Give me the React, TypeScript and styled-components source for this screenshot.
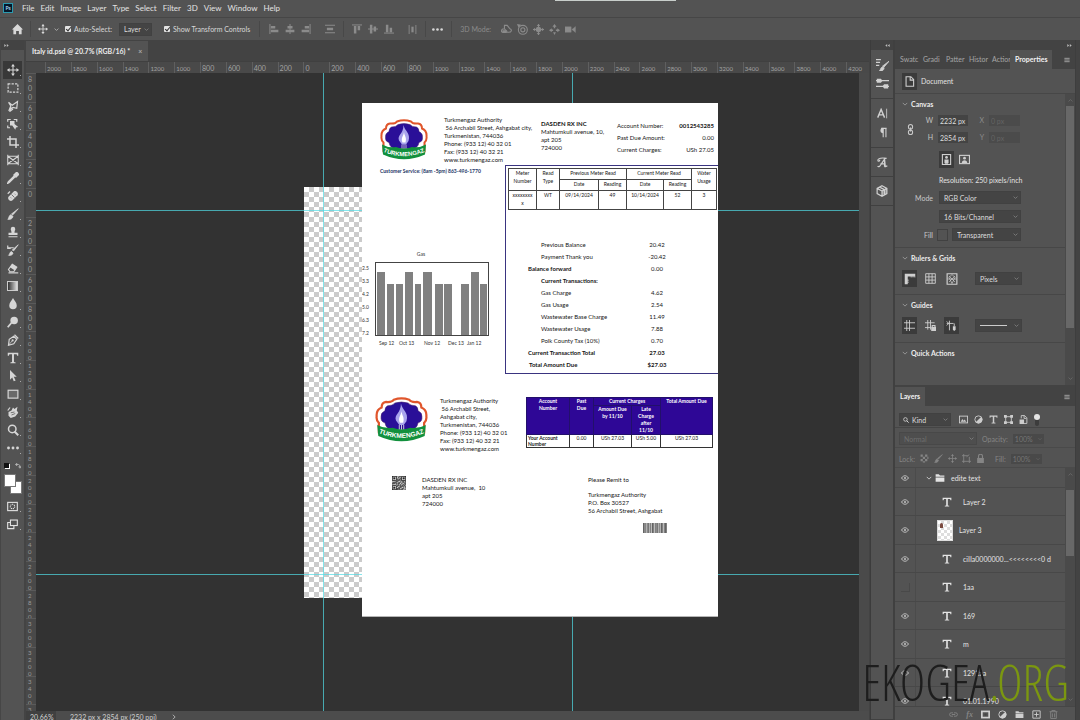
import React from "react";
import styled, { createGlobalStyle } from "styled-components";

const ui = `Lato, "Open Sans", sans-serif`;
const doc = `Lato, "Open Sans", sans-serif`;

const Global = createGlobalStyle`
  * { box-sizing: border-box; }
  body { margin: 0; background: #535353; color: #e2e2e2; font-family: ${ui}; font-size: 7px; }
  button, input, select { font: inherit; color: inherit; margin: 0; }
  button { border: 0; padding: 0; background: none; display: flex; align-items: center; justify-content: center; }
  ul { list-style: none; margin: 0; padding: 0; }
  h2, p { margin: 0; font-size: inherit; }
  svg { display: block; flex: none; }
`;

/* ---------- icons, all drawn on a 16 unit grid ---------- */

const line = { fill: "none", stroke: "currentColor", strokeWidth: 1.6 } as const;

const shapes: Record<string, React.ReactNode> = {
  move: <><path d="M8 1v14M1 8h14" {...line} strokeWidth={1.4} /><path d="M8 0l2.6 3.4H5.4zM8 16l2.6-3.4H5.4zM0 8l3.4-2.6v5.2zM16 8l-3.4-2.6v5.2z" fill="currentColor" /></>,
  marquee: <rect x="1.5" y="2.5" width="13" height="11" {...line} strokeDasharray="3 1.6" />,
  lasso: <path d="M2 3l5 4 7-5-1 9-5-1-5 3 2-5-3-5M5 9l-1 6 4-3" {...line} />,
  object: <><path d="M1 5V2h4M9 2h4v3M1 10v3h3" {...line} /><path d="M4 4h6v4l5 4-3 .6-1 3L7 10H4z" fill="currentColor" /></>,
  crop: <path d="M4 0v12h12M0 4h12v12" {...line} strokeWidth={2} />,
  frame: <path d="M1 3h14v10H1zM1 3l14 10M15 3L1 13M1 1v14M15 1v14" {...line} strokeWidth={1.4} />,
  dropper: <><path d="M10 5l-8 8-1 2 2-1 8-8" {...line} strokeWidth={2} /><path d="M8 4l4-4c2-1 5 2 4 4l-4 4z" fill="currentColor" /></>,
  heal: <><path d="M2 9l7-7c3-2 7 2 5 5l-7 7c-3 2-7-2-5-5z" fill="currentColor" /><path d="M6 6l4 4M5 10l1 1M10 5l1 1" stroke="#535353" /><path d="M1 5l3-3" {...line} /></>,
  brush: <path d="M15 1l-7 8-2-1zM1 15c2-1 1-5 4-6l3 2c0 3-4 5-7 4z" fill="currentColor" stroke="currentColor" />,
  stamp: <path d="M5 4a3 3 0 016 0c0 2-1 2-1 5h4v3H2V9h4c0-3-1-3-1-5zM2 13.5h12V15H2z" fill="currentColor" />,
  history: <><path d="M15 1L9 9 7 8zM2 15c2-1 1-4 4-5l2 2c0 2-3 4-6 3z" fill="currentColor" stroke="currentColor" /><path d="M1 5h8M1 2v4h4" {...line} /></>,
  eraser: <><path d="M7 3l6 4-4 6H4L2 10z" {...line} /><path d="M7 3l6 4-3 4-6-4z" fill="currentColor" /><path d="M2 14.5h13" {...line} /></>,
  drop: <path d="M8 0c2 4 5 6 5 10a5 5 0 01-10 0c0-4 3-6 5-10z" fill="currentColor" />,
  dodge: <><circle cx="9.5" cy="6" r="5" fill="currentColor" /><path d="M6 9l-5 6" {...line} strokeWidth={2.4} /></>,
  pen: <><path d="M2 15l1-8 6-4 4 4-4 6-7 2zM10 1l5 5" {...line} /><circle cx="7.5" cy="8.5" r="1.4" fill="currentColor" /><path d="M2 15l5-6" {...line} strokeWidth={1} /></>,
  type: <path d="M1 1h14v4h-1.4L12.8 3H9.3v10.4l2.2.5V15h-7v-1.100l2.200-.5V3H3.200l-.8 2H1z" fill="currentColor" />,
  arrow: <path d="M4 0l9 9H9l2.500 5-2.500 1-2-5-3 3z" fill="currentColor" />,
  rect: <rect x="1.500" y="3" width="13" height="10.500" {...line} fill="#6a6a6a" />,
  rotate: <><path d="M2 8l4-2 2-4 2 2 4-3-1 5 2 3-4 5-6 2-3-3z" fill="currentColor" /><path d="M5 9l5-1M6 12l5-2" stroke="#535353" /><path d="M1 6l3-4" {...line} /></>,
  zoom: <><circle cx="7" cy="6.500" r="5" {...line} strokeWidth={2} /><path d="M10 10l5 5" {...line} strokeWidth={2.600} /></>,
  dots: <><circle cx="2" cy="8" r="1.900" fill="currentColor" /><circle cx="8" cy="8" r="1.900" fill="currentColor" /><circle cx="14" cy="8" r="1.900" fill="currentColor" /></>,
  mask: <><rect x="1" y="2" width="14" height="12" {...line} /><circle cx="8" cy="8" r="3.200" {...line} strokeDasharray="1.600 1" /></>,
  screens: <><rect x="5" y="1.500" width="10" height="8" {...line} /><path d="M5 5H1v9h9v-4" {...line} /></>,
  home: <path d="M8 0l8 8h-2v7h-4v-5H6v5H2V8H0z" fill="currentColor" />,
  alignL: <><path d="M1.500 0v16" {...line} /><path d="M3 3h7v4H3zM3 9h12v4H3z" fill="currentColor" /></>,
  alignC: <><path d="M8 0v16" {...line} /><path d="M4 3h8v4H4zM1 9h14v4H1z" fill="currentColor" /></>,
  alignR: <><path d="M14.500 0v16" {...line} /><path d="M6 3h7v4H6zM1 9h12v4H1z" fill="currentColor" /></>,
  spread: <><path d="M0 2h16M0 14h16" {...line} /><path d="M3 6h10v4H3z" fill="currentColor" /></>,
  alignT: <><path d="M0 1.500h16" {...line} /><path d="M3 3h4v12H3zM9 3h4v7H9z" fill="currentColor" /></>,
  alignM: <><path d="M0 8h16" {...line} /><path d="M3 1h4v14H3zM9 4h4v8H9z" fill="currentColor" /></>,
  alignB: <><path d="M0 14.500h16" {...line} /><path d="M3 1h4v12H3zM9 6h4v7H9z" fill="currentColor" /></>,
  spreadV: <><path d="M2 0v16M14 0v16" {...line} /><path d="M6 3h4v10H6z" fill="currentColor" /></>,
  orbit: <><path d="M5 7c-4 0-6 3-3 5h9c5 0 5-4 2-5L9 2H5v5l4 4" {...line} /><path d="M2 9h6v4H2z" fill="currentColor" /></>,
  roll: <><circle cx="8.500" cy="8.500" r="6.500" {...line} /><circle cx="8.500" cy="8.500" r="3" {...line} /><path d="M0 0l6 1-4 4z" fill="currentColor" /></>,
  pan3d: <><path d="M8 0v16M0 8h16" {...line} /><circle cx="8" cy="8" r="4" fill="currentColor" /><path d="M8 0l2.600 3H5.400zM8 16l2.600-3H5.400zM0 8l3-2.600v5.200zM16 8l-3-2.600v5.200z" fill="currentColor" /></>,
  slide: <path d="M8 0l3 4H9v2H7V4H5zM6 8H4V6L0 9l4 3v-2h2zM10 8h2V6l4 3-4 3v-2h-2zM6 12h4l-2 4z" fill="currentColor" />,
  camera: <path d="M0 4h9v8H0zM10 8l5-4v8zM15 3v10" fill="currentColor" stroke="currentColor" strokeWidth=".5" />,
  down: <path d="M2 5l6 6 6-6" {...line} strokeWidth={2} />,
  up: <path d="M2 11l6-6 6 6" {...line} strokeWidth={2} />,
  right: <path d="M5 2l6 6-6 6" {...line} strokeWidth={2} />,
  right2: <path d="M1 3l6 5-6 5zM9 3l6 5-6 5z" fill="currentColor" />,
  left2: <path d="M7 3L1 8l6 5zM15 3L9 8l6 5z" fill="currentColor" />,
  menu: <path d="M1 3.500h14M1 8h14M1 12.500h14" {...line} strokeWidth={2} />,
  brushes: <><path d="M0 2h6M0 5.500h5M0 9h4" {...line} /><path d="M16 4l-6 7-2-1zM4 16c2-1 1-4 4-5l2 1c0 3-3 5-6 4z" fill="currentColor" stroke="currentColor" /></>,
  sliders: <><path d="M0 4.500h16M0 11.500h16" {...line} /><path d="M1 2h5l2 2.500L6 7H1zM15 9h-5l-2 2.500 2 2.500h5z" fill="currentColor" /></>,
  character: <><path d="M1 14L6 2l5 12M3 10h6" {...line} strokeWidth={2} /><path d="M14 1v14" {...line} strokeWidth={1.200} /></>,
  paragraph: <><path d="M9 15V2M13 15V2M6 2h8" {...line} /><path d="M9 1a4 4 0 000 8z" fill="currentColor" /></>,
  glyphs: <path d="M1 5c1-4 7-4 13-3M1 13c1 2 3 1 4-1l6-9 1 11 3-1M5 10h7M11 3v11M1 5c1 2 3 1 3-1" {...line} strokeWidth={1.800} />,
  cube: <><path d="M8 1l6.500 3.500v7L8 15l-6.500-3.500v-7zM8 8v7M8 8L1.500 4.500M8 8l6.500-3.500M4.800 2.800l6.500 3.500v7" {...line} /><path d="M8 8l6.500-3.500v7L8 15z" fill="currentColor" opacity=".5" /></>,
  page: <path d="M3 1h7l4 4v10H3zM9 1v5h5" {...line} />,
  chain: <><rect x="5" y="0.800" width="6" height="6.500" rx="3" {...line} /><rect x="5" y="8.700" width="6" height="6.500" rx="3" {...line} /><path d="M8 5v6" {...line} /></>,
  portrait: <><rect x="2" y="0.800" width="12" height="14.400" {...line} /><circle cx="8" cy="5" r="2" fill="currentColor" /><path d="M5 8h6v4l-1 2H6l-1-2z" fill="currentColor" /></>,
  landscape: <><rect x="0.800" y="2" width="14.400" height="12" {...line} /><circle cx="8" cy="6" r="2" fill="currentColor" /><path d="M4 13c0-5 8-5 8 0z" fill="currentColor" /></>,
  rulers: <path d="M1 15V1h14v5h-1V4.500h-1.500V6h-1V4.500H10V6H9V4.500H5V9h1.500v1H5v1.500h1.500v1H5V15z" fill="currentColor" />,
  grid: <path d="M1 1h14v14H1zM5.700 1v14M10.300 1v14M1 5.700h14M1 10.300h14" {...line} strokeWidth={1.300} />,
  pixelGrid: <><path d="M1.500 1h13v14h-13z" {...line} /><path d="M4 4l8 8M12 4l-8 8M8 2l-4 4 4 8 4-8zM2 8h12" {...line} strokeWidth={0.900} /></>,
  guides: <path d="M4 0v16M8 0v16M0 4h16M0 12h16" {...line} strokeWidth={1.300} />,
  guidesLock: <><path d="M4 0v14M8 0v14M0 4h14M0 11h8" {...line} strokeWidth={1.300} /><path d="M9 10h7v6H9z" fill="currentColor" /><path d="M10.500 10V8h4v2" {...line} /></>,
  guidesSmart: <><path d="M5 1v14M1 5h10M12 5v4M1 2l3 3-3 3" {...line} strokeWidth={1.300} /><path d="M10 9h4v5l-2 2-2-2z" fill="currentColor" /></>,
  search: <><circle cx="6.500" cy="6.500" r="4.800" {...line} strokeWidth={2} /><path d="M10 10l5 5" {...line} strokeWidth={2.500} /></>,
  image: <><rect x="0.800" y="2" width="14.400" height="12" {...line} /><path d="M3 12l3-5 2 3 2-2 3 4z" fill="currentColor" /></>,
  adjust: <><circle cx="8" cy="8" r="6.500" {...line} /><path d="M12.600 3.400A6.500 6.500 0 013.400 12.600z" fill="currentColor" /></>,
  bounds: <><path d="M3 3h10v10H3z" {...line} /><path d="M0 0h5v5H0zM11 0h5v5h-5zM0 11h5v5H0zM11 11h5v5h-5z" fill="currentColor" /></>,
  smart: <><path d="M4 6V1h6l4 4v10H8M9 1v5h4" {...line} /><path d="M1 8h8v8H1z" fill="currentColor" /></>,
  checker: <path d="M1 1h4v4H1zM9 1h4v4H9zM5 5h4v4H5zM1 9h4v4H1zM9 9h4v4H9zM13 5h2v4h-2zM5 13h4v2H5z" fill="currentColor" />,
  artboard: <path d="M3 0v16M13 5v11M0 3h10M0 13h16M8 5l5-4" {...line} />,
  lock: <><path d="M2 7h12v9H2z" fill="currentColor" /><path d="M4.500 7V4a3.500 3.500 0 017 0v3" {...line} strokeWidth={2} /></>,
  eye: <><path d="M1 8c4-6 10-6 14 0-4 6-10 6-14 0z" {...line} strokeWidth={2} /><circle cx="8" cy="8" r="2.200" fill="currentColor" /></>,
  folder: <path d="M1 2h5l2 2h7v2H1zM1 7h14v7H1z" fill="currentColor" />,
  link: <path d="M7 5H4a3 3 0 000 6h3M9 5h3a3 3 0 010 6H9M5 8h6" {...line} />,
  addMask: <><rect x="1.500" y="2.500" width="13" height="11" {...line} strokeWidth={3} /><circle cx="8" cy="8" r="2" fill="#444" /></>,
  plus: <path d="M1.500 1.500h13v13h-13zM8 4v8M4 8h8" {...line} />,
  trash: <path d="M1 3h14M5 3V1h6v2M3 3v12h10V3M6 6v7M10 6v7" {...line} />,
  swap: <path d="M3 4h6c3 0 4 2 4 6M1 4l4-3v6zM13 14l-3-4h6z" fill="none" stroke="currentColor" strokeWidth={1.800} />,
};

const Icon = ({ name, size = 10 }: { name: string; size?: number }) => (
  <svg width={size} height={size} viewBox="0 0 16 16" aria-hidden="true">{shapes[name]}</svg>
);

/* ---------- application frame ---------- */

const Frame = styled.div`
  height: 100vh; display: flex; flex-direction: column; overflow: hidden; position: relative;
`;
const MenuBar = styled.nav`
  height: 18px; padding: 0 3px 2px; display: flex; align-items: center; gap: 6px; font-size: 8px; flex: none;
  border-bottom: 1px solid #464646; position: relative;
  &::after { content: ""; position: absolute; top: 0; left: 51.4%; width: 121px; height: 1px; background: #c8cecb; }
`;
const Logo = styled.span`
  width: 10px; height: 10px; margin-right: 3px; border: 1px solid #2b9bb0; background: #04182b; color: #a9dbf2;
  font-size: 5px; line-height: 8px; font-weight: 700; text-align: center;
`;
const OptionsBar = styled.div`
  height: 22px; display: flex; align-items: center; padding: 0 12px; color: #d8d8d8; gap: 6px; flex: none;
`;
const Sep = styled.i<{ $gap?: number }>`
  width: 1px; height: 16px; background: #484848; margin: 0 ${p => p.$gap ?? 0}px;
`;
const Group = styled.div<{ $gap: number; $dim?: boolean }>`
  display: flex; align-items: center; gap: ${p => p.$gap}px; color: ${p => (p.$dim ? "#8b8b8b" : "inherit")};
`;
const Check = styled.label`
  display: flex; align-items: center; gap: 3px; white-space: nowrap; font-size: 7px;
  input { appearance: none; width: 6px; height: 6px; border-radius: 1px; background: #e4e4e4; position: relative; }
  input:checked::after {
    content: ""; position: absolute; left: 2px; top: 0; width: 2px; height: 4px;
    border: solid #333; border-width: 0 1px 1px 0; transform: rotate(40deg);
  }
`;
const SelectBox = styled.span<{ $w: number; $h?: number; $flat?: boolean }>`
  position: relative; display: flex; align-items: center; width: ${p => p.$w}px; height: ${p => p.$h ?? 13}px;
  background: ${p => (p.$flat ? "#4e4e4e" : "#444")}; border: 1px solid ${p => (p.$flat ? "#484848" : "#414141")};
  color: ${p => (p.$flat ? "#7d7d7d" : "#dedede")};
  select { appearance: none; width: 100%; height: 100%; border: 0; background: none; padding: 0 8px 0 4px; outline: 0; }
  svg { position: absolute; right: 2px; color: #999; pointer-events: none; }
`;
const Pick = ({ w, h, label, value, flat }: { w: number; h?: number; label: string; value: string; flat?: boolean }) => (
  <SelectBox $w={w} $h={h} $flat={flat}>
    <select aria-label={label} disabled={flat}><option>{value}</option></select>
    <Icon name="down" size={5} />
  </SelectBox>
);

const Body = styled.div`
  flex: 1; min-height: 0; display: grid; grid-template-columns: 26px minmax(0, 1fr) 26px 181px 4px; background: #434343;
`;

/* ---------- tool bar ---------- */

const Tools = styled.aside`
  background: #535353; border-right: 2px solid #444; border-left: 1px solid #464646;
  display: flex; flex-direction: column; align-items: center;
`;
const Collapse = styled.button<{ $end?: boolean }>`
  align-self: stretch; height: 10px; flex: none; background: #434343; color: #bbb; padding: 0 3px;
  justify-content: ${p => (p.$end ? "flex-end" : "flex-start")};
`;
const ToolList = styled.div`padding-top: 11px; display: flex; flex-direction: column; color: #d6d6d6;`;
const Tool = styled.button<{ $on?: boolean }>`
  width: 19px; height: 18px; background: ${p => (p.$on ? "#383838" : "none")}; position: relative;
  &::after { content: ""; position: absolute; right: 1px; bottom: 3px; width: 1px; height: 1px; background: #aaa; }
`;
const GradientChip = styled.span`
  width: 11px; height: 10px; border: 1px solid #ccc; background: linear-gradient(90deg, #333, #ddd);
`;
const SmallRow = styled.div`display: flex; gap: 6px; height: 17px; align-items: center; color: #ccc;`;
const Defaults = styled.span`width: 5px; height: 5px; background: #111; box-shadow: 1px 1px #fff;`;
const Swatches = styled.div`
  display: grid; grid-template-columns: 6px 6px 6px; grid-template-rows: 7px 6px 7px; margin-bottom: 3px;
  i { background: #fff; border: 1px solid #777; grid-area: 2 / 2 / 4 / 4; }
  i + i { grid-area: 1 / 1 / 3 / 3; }
`;
const toolNames = ["move", "marquee", "lasso", "object", "crop", "frame", "dropper", "heal", "brush", "stamp", "history",
  "eraser", "gradient", "drop", "dodge", "pen", "type", "arrow", "rect", "rotate", "zoom", "dots"];

/* ---------- document window ---------- */

const DocWindow = styled.main`display: flex; flex-direction: column; min-width: 0; min-height: 0;`;
const DocTabs = styled.div`height: 21px; display: flex; padding-top: 1px; flex: none;`;
const DocTab = styled.div`
  background: #535353; padding: 0 6px; display: flex; align-items: center; gap: 8px; color: #ececec;
  font-weight: 700; font-size: 7px; white-space: nowrap; button { color: #aaa; }
`;
const RulerTop = styled.div`
  height: 12px; flex: none; background: #494949; border-top: 1px solid #404040; padding-left: 19px; overflow: hidden; display: flex;
`;
const TopCells = styled.div`
  flex: 1; margin-right: -3px; display: flex;
  span { flex: 1 1 0; min-width: 0; border-left: 1px solid #5f5f5f; padding-left: 1px; color: #a2a2a2; font: 7px/13px ${ui}; }
`;
const TopLabel = styled.span<{ $small: boolean }>`&& { font-size: ${p => (p.$small ? 6 : 7)}px; }`;
const Middle = styled.div`flex: 1; min-height: 0; display: grid; grid-template-columns: 10px minmax(0, 1fr) 10px;`;
const RulerSide = styled.div`background: #494949; overflow: hidden; display: flex; flex-direction: column; min-height: 0;`;
const SideCells = styled.div`
  flex: 1; margin-bottom: -22px; display: flex; flex-direction: column;
  span { flex: 1 1 0; min-height: 0; border-top: 1px solid #5a5a5a; padding: 1px 3px 0 2px; color: #999; display: flex; flex-direction: column; }
`;
const Digit = styled.b<{ $tight: boolean }>`
  font: ${p => (p.$tight ? "6px/7px" : "7px/9px")} ${ui};
`;
const Gutter = styled.div`background: #4a4a4a;`;
const Canvas = styled.div`position: relative; background: #323232; overflow: hidden;`;
const Checker = styled.div`
  position: absolute; left: 268px; top: 114px; width: 288px; height: 411px;
  background: repeating-conic-gradient(#cbcbcb 0 25%, #fff 0 50%) 0 0 / 10px 10px;
`;
const Guide = styled.i<{ $x?: number; $y?: number }>`
  position: absolute; background: #50dbe6; opacity: 0.7;
  ${p => (p.$x !== undefined ? `left: ${p.$x}px; top: 0; bottom: 0; width: 1px;` : `top: ${p.$y}px; left: 0; right: 0; height: 1px;`)}
`;
const Status = styled.footer`
  height: 9px; flex: none; background: #4c4c4c; display: flex; gap: 14px; color: #d0d0d0; font: 7px/12px ${ui};
  span:first-child { background: #404040; padding-left: 4px; width: 30px; }
  svg { margin-top: 3px; }
`;

/* ---------- the bill on the canvas ---------- */

const Sheet = styled.article`
  position: absolute; left: 326px; top: 30px; width: 356px; height: 514px; background: #fff; color: #161616;
  font: 6px/8px ${doc}; border-bottom: 1px solid #b5b5b5; white-space: nowrap;
`;
const Letterhead = styled.header`
  height: 62px; display: grid; grid-template-columns: 64px 97px 76px 1fr; align-items: start; padding: 13px 4px 0 18px;
  > svg { margin-top: 3px; }
`;
const Lines = styled.p<{ $top?: number }>`white-space: pre; font-size: 6px; line-height: 8px; padding-top: ${p => p.$top ?? 0}px;`;
const Facts = styled.dl`
  margin: 0; display: grid; grid-template-columns: 1fr auto; line-height: 12px; padding-top: 4px;
  dd { margin: 0; text-align: right; }
`;
const Split = styled.section`display: grid; grid-template-columns: 143px 1fr; height: 209px;`;
const Service = styled.p`font-size: 5px; line-height: 10px; font-weight: 700; color: #1a3566; padding: 1px 0 72px 18px;`;
const Statement = styled.div`border: 1px solid #3a3480; border-right: 0; padding: 2px 0 0 2px;`;
const ReadTable = styled.table`
  width: 208px; table-layout: fixed; border-collapse: collapse; font-size: 5px; line-height: 8px; white-space: normal; text-align: center;
  th, td { border: 1px solid #444; padding: 0; font-weight: 400; vertical-align: top; }
  tr { height: 11px; } tbody tr { height: 19px; }
`;
const Charges = styled.dl`margin: 29px 0 0 20px; display: grid; grid-template-columns: 106px 46px; line-height: 12px;`;
const ChargeName = styled.dt<{ $level: number; $bold: boolean }>`
  padding-left: ${p => p.$level}px; font-weight: ${p => (p.$bold ? 700 : 400)};
`;
const ChargeSum = styled.dd<{ $bold: boolean }>`margin: 0; text-align: center; font-weight: ${p => (p.$bold ? 700 : 400)};`;
const Stub = styled.section`
  display: grid; grid-template-columns: 65px 86px 186px; align-items: start; padding: 23px 0 0 13px; height: 101px;
`;
const DueTable = styled.table`
  width: 186px; table-layout: fixed; border-collapse: collapse; font-size: 5px; line-height: 7px; text-align: center;
  th { background: #2e0796; color: #fff; font-weight: 700; border: 1px solid #22106a; padding: 0; vertical-align: top; }
  td, tbody th { border: 1px solid #333; padding: 0 1px; vertical-align: top; line-height: 6px; }
  tbody th { background: #fff; color: #222; text-align: left; }
`;
const Mailing = styled.section`
  display: grid; grid-template-columns: 30px 166px 1fr; padding: 1px 0 0 30px; align-items: start;
`;
const RemitBox = styled.div`svg { margin: 8px 0 0 55px; }`;

const Emblem = ({ w, h, id }: { w: number; h: number; id: string }) => (
  <svg width={w} height={h} viewBox="0 0 96 82" preserveAspectRatio="none" role="img" aria-label="Turkmengaz">
    <path id={id} d="M5 65q43 19 86 0" fill="none" />
    <path d="M34 5q14-5 28 0q3 5 14 4q8 1 8 10q10 4 9 16q1 8-4 12v18q-41 22-82 0V47q-5-4-4-12q-1-12 9-16q0-9 8-10q11 1 14-4z" fill="#fff" stroke="#e0562c" strokeWidth="4" />
    <path d="M36 11q12-4 24 0q4 5 13 5q5 2 5 9q8 4 7 11q1 9-7 11q-2 12-14 12H32q-12 0-14-12q-8-2-7-11q-1-7 7-11q0-7 5-9q9 0 13-5z" fill="#2a0f98" stroke="#46206c" />
    <path d="M47 12c2 12 15 16 10 32l-5 7h-8l-6-8c-4-11 9-13 9-31z" fill="#a9a4ec" />
    <path d="M48 26c1 8 6 11 3 21h-6c-4-9 2-13 3-21z" fill="#fff" />
    <path d="M44 51v10M48 51v10M52 51v10" stroke="#eee" strokeWidth="1.5" />
    <path d="M4 51q12 7 28 5q16 6 32 0q16 2 28-5l-2 20q-42 19-84 0z" fill="#12903d" />
    <text fill="#fff" fontFamily="Liberation Sans, sans-serif" fontWeight="700" fontSize="12"><textPath href={`#${id}`} startOffset="50%" textAnchor="middle">TURKMENGAZ</textPath></text>
  </svg>
);

const bars = [[2, 8, 1], [12, 7, 0], [21, 7, 0], [30, 8, 1], [40, 6, 0], [48, 9, 1], [60, 8, 0], [69, 8, 0], [86, 8, 0], [96, 8, 1], [105, 7, 0]];
const UsageChart = () => (
  <svg width="143" height="100" viewBox="0 0 143 100" fontFamily="Lato, sans-serif" fontSize="5" fill="#333">
    <text x="59" y="8" textAnchor="middle">Gas</text>
    <rect x="13.5" y="14.5" width="113" height="73" fill="#fff" stroke="#444" />
    {bars.map(([x, w, tall]) => <rect key={x} x={13 + x} y={tall ? 24 : 36} width={w} height={tall ? 63 : 51} fill="#808080" />)}
    {["2.5", "3.3", "4.2", "5.0", "6.3", "7.2"].map((t, i) => <text key={t} x="0" y={22 + i * 13} fontSize="5">{t}</text>)}
    {[["Sep 12", 17], ["Oct 13", 37], ["Nov 12", 62], ["Dec 13", 86], ["Jan 12", 105]].map(([t, x]) => <text key={t} x={x} y="97">{t}</text>)}
  </svg>
);

const QrCode = () => (
  <svg width="14" height="14" viewBox="0 0 21 21" role="img" aria-label="QR code">
    <rect width="21" height="21" fill="#ccc" />
    {Array.from({ length: 441 }, (_, i) => i).filter(i => ((i * i * 31 + i * 17) % 97) % 2 === 0).map(i => (
      <rect key={i} x={i % 21} y={Math.floor(i / 21)} width="1" height="1" fill="#1c1c1c" />
    ))}
    {[[0, 0], [14, 0], [0, 14]].map(([x, y]) => (
      <g key={`${x}-${y}`}><rect x={x + 0.5} y={y + 0.5} width="6" height="6" fill="#ddd" stroke="#222" /><rect x={x + 2} y={y + 2} width="3" height="3" fill="#222" /></g>
    ))}
  </svg>
);
const Barcode = () => (
  <svg width="24" height="10" viewBox="0 0 48 20" role="img" aria-label="Barcode">
    <rect width="48" height="20" fill="#bbb" />
    {[0, 3, 5, 9, 11, 14, 18, 20, 24, 27, 29, 33, 36, 38, 42, 44, 46].map((x, i) => <rect key={x} x={x} width={i % 3 ? 1.2 : 1.8} height="20" fill="#5a5a5a" />)}
  </svg>
);

const charges: [string, string, number, boolean][] = [
  ["Previous Balance", "20.42", 13, false], ["Payment Thank you", "-20.42", 13, false], ["Balance forward", "0.00", 0, true],
  ["Current Transactions:", "", 13, true], ["Gas Charge", "4.62", 13, false], ["Gas Usage", "2.54", 13, false],
  ["Wastewater Base Charge", "11.49", 13, false], ["Wastewater Usage", "7.88", 13, false], ["Polk County Tax (10%)", "0.70", 13, false],
  ["Current Transaction Total", "27.03", 0, true], ["Total Amount Due", "$27.03", 1, true],
];

const Bill = () => (
  <Sheet>
    <Letterhead>
      <Emblem w={48} h={41} id="ribbon-a" />
      <Lines>{"Turkmengaz Authority\n 56 Archabil Street, Ashgabat city,\nTurkmenistan, 744036\nPhone: (933 12) 40 32 01\nFax: (933 12) 40 32 21\nwww.turkmengaz.com"}</Lines>
      <Lines $top={4}><b>DASDEN RX INC</b>{"\nMahtumkuli avenue, 10,\napt 205\n724000"}</Lines>
      <Facts>
        <dt>Account Number:</dt><dd><b>0012543285</b></dd>
        <dt>Past Due Amount:</dt><dd>0.00</dd>
        <dt>Current Charges:</dt><dd>USh 27.05</dd>
      </Facts>
    </Letterhead>
    <Split>
      <div>
        <Service>Customer Service: (8am -5pm) 863-496-1770</Service>
        <UsageChart />
      </div>
      <Statement>
        <ReadTable>
          <colgroup>{[28, 23, 39, 28, 37, 28, 25].map((w, i) => <col key={i} width={w} />)}</colgroup>
          <thead>
            <tr><th rowSpan={2}>Meter Number</th><th rowSpan={2}>Read Type</th><th colSpan={2}>Previous Meter Read</th><th colSpan={2}>Current Meter Read</th><th rowSpan={2}>Water Usage</th></tr>
            <tr><th>Date</th><th>Reading</th><th>Date</th><th>Reading</th></tr>
          </thead>
          <tbody><tr><td>xxxxxxxx<br />x</td><td>WT</td><td>09/14/2024</td><td>49</td><td>10/14/2024</td><td>52</td><td>3</td></tr></tbody>
        </ReadTable>
        <Charges>
          {charges.map(([name, sum, level, bold]) => (
            <React.Fragment key={name}>
              <ChargeName $level={level} $bold={bold}>{name}</ChargeName>
              <ChargeSum $bold={bold && sum !== "0.00"}>{sum}</ChargeSum>
            </React.Fragment>
          ))}
        </Charges>
      </Statement>
    </Split>
    <Stub>
      <Emblem w={53} h={45} id="ribbon-b" />
      <Lines>{"Turkmengaz Authority\n 56 Archabil Street,\nAshgabat city,\nTurkmenistan, 744036\nPhone: (933 12) 40 32 01\nFax: (933 12) 40 32 21\nwww.turkmengaz.com"}</Lines>
      <DueTable>
        <colgroup>{[43, 24, 38, 29, 52].map((w, i) => <col key={i} width={w} />)}</colgroup>
        <thead>
          <tr><th rowSpan={2}>Account<br />Number</th><th rowSpan={2}>Past<br />Due</th><th colSpan={2}>Current Charges</th><th rowSpan={2}>Total Amount Due</th></tr>
          <tr><th>Amount Due<br />by 11/10</th><th>Late<br />Charge<br />after<br />11/10</th></tr>
        </thead>
        <tbody><tr><th>Your Account<br />Number</th><td>0.00</td><td>USh 27.03</td><td>USh 5.00</td><td>USh 27.03</td></tr></tbody>
      </DueTable>
    </Stub>
    <Mailing>
      <QrCode />
      <Lines>{"DASDEN RX INC\nMahtumkuli avenue,  10\napt 205\n724000"}</Lines>
      <RemitBox>
        <Lines>Please Remit to</Lines>
        <Lines $top={7}>{"Turkmengaz Authority\nP.O. Box 30527\n56 Archabil Street, Ashgabat"}</Lines>
        <Barcode />
      </RemitBox>
    </Mailing>
  </Sheet>
);

/* ---------- right side ---------- */

const Strip = styled.aside`display: flex; flex-direction: column; border-left: 1px solid #3c3c3c; border-right: 2px solid #404040; margin-left: 1px;`;
const StripGroup = styled.div<{ $grow?: boolean }>`
  background: #535353; border-bottom: 1px solid #404040; color: #d0d0d0; padding: 5px 0; display: flex; flex-direction: column; align-items: center;
  flex: ${p => (p.$grow ? 1 : "none")};
  button { height: 19px; width: 22px; }
  button:only-child { height: 18px; }
`;
const Side = styled.aside`display: flex; flex-direction: column; min-height: 0; background: #434343; border-right: 1px solid #3e3e3e;`;
const Panel = styled.section<{ $grow?: boolean; $h?: number }>`
  display: flex; flex-direction: column; min-height: 0; background: #535353;
  ${p => (p.$grow ? "flex: 1;" : `flex: none; height: ${p.$h}px; margin-bottom: 2px;`)}
`;
const Tabs = styled.div`
  height: 19px; flex: none; background: #434343; display: flex; align-items: stretch; color: #a6a6a6; padding-right: 5px; font-size: 7px;
  > button:last-child { margin-left: auto; color: #bbb; }
`;
const Tab = styled.button<{ $on?: boolean }>`
  flex: none; padding: 0 5px 2px;
  ${p => (p.$on ? "background: #535353; color: #f2f2f2; font-weight: 700;" : "width: 23px; padding-right: 0; justify-content: flex-start;")}
`;
const PanelHead = styled.div`height: 25px; flex: none; display: flex; align-items: center; gap: 4px; padding-left: 7px; border-bottom: 1px solid #474747;`;
const Scroller = styled.div`flex: 1; min-height: 0; display: grid; grid-template-columns: 1fr 10px;`;
const Content = styled.div`min-width: 0; overflow: hidden;`;
const Track = styled.div<{ $top: number; $thumb: number }>`
  background: #4a4a4a; color: #777; display: flex; flex-direction: column; align-items: center; justify-content: space-between; padding: 4px 0; position: relative;
  &::before { content: ""; position: absolute; left: 1px; right: 1px; top: ${p => p.$top}px; height: ${p => p.$thumb}px; background: #686868; }
`;
const Block = styled.div<{ $h: number }>`min-height: ${p => p.$h}px; border-bottom: 1px solid #474747; padding: 5px 0 0 7px;`;
const BlockTitle = styled.h2`display: flex; align-items: center; gap: 3px; height: 10px; font-size: 7px; font-weight: 700; color: #ececec; svg { color: #aaa; }`;
const SizeGrid = styled.div`
  display: grid; grid-template-columns: 13px 20px 30px 21px 31px; align-items: center; padding: 3px 0 0 3px;
  > span { grid-row: 1 / 3; color: #c8c8c8; }
  label { text-align: right; padding-right: 5px; color: #c4c4c4; line-height: 17px; }
  label.dim { color: #8c8c8c; }
`;
const Field = styled.input`
  width: 100%; height: 11px; border: 0; background: #444; color: #dedede; padding: 0 2px; font-size: 7px;
  &:disabled { background: #4b4b4b; color: #646464; }
`;
const FormRow = styled.div<{ $gap?: number; $h?: number }>`
  height: ${p => p.$h ?? 18}px; display: flex; align-items: center; gap: ${p => p.$gap ?? 6}px;
  > em { width: 31px; text-align: right; color: #c8c8c8; font-style: normal; }
`;
const Toggle = styled.button<{ $on?: boolean }>`width: 15px; height: 17px; color: #cfcfcf; background: ${p => (p.$on ? "#3b3b3b" : "none")};`;
const FillChip = styled.button`width: 11px; height: 12px; border: 1px solid #414141;`;
const IconRow = styled.div<{ $top: number }>`display: flex; gap: 6px; align-items: center; padding-top: ${p => p.$top}px; > :last-child { margin-left: 10px; }`;
const StrokeBox = styled(SelectBox)`&::before { content: ""; width: 27px; height: 1px; margin-left: 4px; background: #ccc; position: absolute; }`;

const Filters = styled.div`height: 22px; flex: none; display: flex; align-items: center; gap: 6px; padding: 6px 4px 0; border-bottom: 1px solid #454545; color: #cdcdcd;`;
const FilterPick = styled.div`position: relative; color: #ddd; margin-right: 2px; > svg { position: absolute; left: 4px; top: 4px; } select { padding-left: 12px; }`;
const Blend = styled.div`height: 20px; flex: none; display: flex; align-items: center; gap: 5px; padding: 2px 4px 0; color: #858585; border-bottom: 1px solid #4a4a4a;`;
const Amount = styled.output`
  width: 31px; background: #494949; color: #757575; line-height: 10px; padding: 0 2px; display: flex; align-items: center; justify-content: space-between;
`;
const LayerList = styled.ul`overflow: hidden;`;
const LayerRow = styled.li`
  height: 28px; display: grid; grid-template-columns: 21px 1fr; border-bottom: 1px solid #484848; color: #e4e4e4;
  &:first-child { height: 20px; } &:nth-child(odd):not(:first-child) { height: 29px; }
  > button { border-right: 1px solid #4b4b4b; color: #bdbdbd; }
`;
const LayerBody = styled.div<{ $left: number; $gap: number }>`display: flex; align-items: center; padding-left: ${p => p.$left}px; gap: ${p => p.$gap}px; white-space: nowrap;`;
const NoEye = styled.span`width: 9px; height: 9px; border: solid #494949; border-width: 0 1px 1px 0;`;
const Thumb = styled.span`
  width: 16px; height: 21px; border: 1px solid #ddd; background: repeating-conic-gradient(#ddd 0 25%, #fff 0 50%) 0 0 / 6px 6px; position: relative;
  &::after { content: ""; position: absolute; left: 2px; top: 2px; width: 3px; height: 5px; background: #7a4a40; border-radius: 2px 2px 0 0; }
`;
const LayerActions = styled.div`height: 14px; flex: none; display: flex; align-items: center; justify-content: flex-end; gap: 8px; padding: 2px 17px 0 0; border-top: 1px solid #464646; color: #cfcfcf;`;
const Dim = styled.button`color: #858585; font: italic 700 8px/10px "Liberation Serif", serif;`;
const Watermark = styled.div`
  position: absolute; right: 11px; bottom: 8px; font: 300 49px/60px "Open Sans Condensed Light", "Open Sans Condensed", sans-serif;
  color: #1d1d1d; pointer-events: none; span { color: #7b9710; }
`;

const layers = ["Layer 2", "Layer 3", "ciIIa0000000...<<<<<<<<0 d", "1aa", "169", "m", "1291aa", "01.01.1990"];
const topScale = Array.from({ length: 32 }, (_, i) => String(Math.abs(i - 10) * 200));
const sideScale = Array.from({ length: 23 }, (_, i) => String(Math.abs(i - 4) * 200));

export default function App() {
  return (
    <Frame>
      <Global />
      <MenuBar>
        <Logo>Ps</Logo>
        {["File", "Edit", "Image", "Layer", "Type", "Select", "Filter", "3D", "View", "Window", "Help"].map(m => <button key={m}>{m}</button>)}
      </MenuBar>
      <OptionsBar>
        <button aria-label="Home"><Icon name="home" size={11} /></button>
        <Sep $gap={1} />
        <Group $gap={6}><Icon name="move" size={10} /><Icon name="down" size={5} /></Group>
        <Group $gap={7}>
          <Check><input type="checkbox" defaultChecked />Auto-Select:</Check>
          <Pick w={33} label="Auto-select target" value="Layer" />
        </Group>
        <span />
        <Check><input type="checkbox" defaultChecked />Show Transform Controls</Check>
        <Sep $gap={3} />
        <Group $gap={6} $dim>{["alignL", "alignC", "alignR"].map(n => <button key={n} aria-label={n}><Icon name={n} /></button>)}</Group>
        <Group $gap={8} $dim><span /><Icon name="spread" /><Sep /><Icon name="alignT" /></Group>
        <Group $gap={6} $dim><Icon name="alignM" /><Icon name="alignB" /></Group>
        <Group $gap={8} $dim><span /><Icon name="spreadV" size={9} /><Sep /></Group>
        <button aria-label="More options"><Icon name="dots" size={11} /></button>
        <Sep $gap={2} />
        <Group $gap={5} $dim>
          <span>3D Mode:</span><span />
          {["orbit", "roll", "pan3d", "slide", "camera"].map(n => <Icon key={n} name={n} size={11} />)}
        </Group>
      </OptionsBar>
      <Body>
        <Tools>
          <Collapse aria-label="Collapse tools"><Icon name="right2" size={5} /></Collapse>
          <ToolList>
            {toolNames.map((n, i) => (
              <Tool key={n} $on={i === 0} aria-label={n}>{n === "gradient" ? <GradientChip /> : <Icon name={n} size={12} />}</Tool>
            ))}
          </ToolList>
          <SmallRow><Defaults /><Icon name="swap" size={6} /></SmallRow>
          <Swatches><i /><i /></Swatches>
          <Tool aria-label="Quick mask"><Icon name="mask" size={11} /></Tool>
          <Tool aria-label="Screen mode"><Icon name="screens" size={11} /></Tool>
        </Tools>
        <DocWindow>
          <DocTabs><DocTab>Italy id.psd @ 20.7% (RGB/16) *<button aria-label="Close">×</button></DocTab></DocTabs>
          <RulerTop><TopCells>{topScale.map((t, i) => <TopLabel key={i} $small={t.length > 3}>{t}</TopLabel>)}</TopCells></RulerTop>
          <Middle>
            <RulerSide><SideCells>{sideScale.map((t, i) => <span key={i}>{t.split("").map((d, j) => <Digit key={j} $tight={t.length > 3}>{d}</Digit>)}</span>)}</SideCells></RulerSide>
            <Canvas>
              <Checker />
              <Guide $x={287} /><Guide $x={536} /><Guide $y={137} /><Guide $y={501} />
              <Bill />
            </Canvas>
            <Gutter />
          </Middle>
          <Status><span>20.66%</span><span>2232 px x 2854 px (250 ppi)</span><Icon name="right" size={6} /></Status>
        </DocWindow>
        <Strip>
          <Collapse $end aria-label="Expand panels"><Icon name="left2" size={5} /></Collapse>
          <StripGroup>{["brushes", "sliders"].map(n => <button key={n} aria-label={n}><Icon name={n} size={13} /></button>)}</StripGroup>
          <StripGroup>{["character", "paragraph"].map(n => <button key={n} aria-label={n}><Icon name={n} size={11} /></button>)}</StripGroup>
          <StripGroup><button aria-label="Glyphs"><Icon name="glyphs" size={11} /></button></StripGroup>
          <StripGroup><button aria-label="3D"><Icon name="cube" size={12} /></button></StripGroup>
          <StripGroup $grow />
        </Strip>
        <Side>
          <Collapse $end aria-label="Collapse panels"><Icon name="right2" size={5} /></Collapse>
          <Panel $h={335}>
            <Tabs>
              {["Swatc", "Gradi", "Patter", "Histor", "Actior"].map(t => <Tab key={t}>{t}</Tab>)}
              <Tab $on>Properties</Tab>
              <button aria-label="Panel menu"><Icon name="menu" size={6} /></button>
            </Tabs>
            <PanelHead><Toggle $on><Icon name="page" size={11} /></Toggle>Document</PanelHead>
            <Scroller>
              <Content>
                <Block $h={154}>
                  <BlockTitle><Icon name="down" size={6} />Canvas</BlockTitle>
                  <SizeGrid>
                    <span><Icon name="chain" size={11} /></span>
                    <label htmlFor="w">W</label><Field id="w" defaultValue="2232 px" /><label className="dim" htmlFor="x">X</label><Field id="x" disabled defaultValue="0 px" />
                    <label htmlFor="h">H</label><Field id="h" defaultValue="2854 px" /><label className="dim" htmlFor="y">Y</label><Field id="y" disabled defaultValue="0 px" />
                  </SizeGrid>
                  <FormRow $h={27} $gap={3}><em /><span /><Toggle $on aria-label="Portrait"><Icon name="portrait" size={11} /></Toggle><Toggle aria-label="Landscape"><Icon name="landscape" size={11} /></Toggle></FormRow>
                  <FormRow $h={14}><em />Resolution: 250 pixels/inch</FormRow>
                  <FormRow $h={21}><em>Mode</em><Pick w={82} label="Mode" value="RGB Color" /></FormRow>
                  <FormRow $h={17}><em /><Pick w={82} label="Bit depth" value="16 Bits/Channel" /></FormRow>
                  <FormRow $h={19} $gap={4}><em>Fill</em><FillChip aria-label="Fill colour" /><Pick w={69} label="Fill" value="Transparent" /></FormRow>
                </Block>
                <Block $h={47}>
                  <BlockTitle><Icon name="down" size={6} />Rulers &amp; Grids</BlockTitle>
                  <IconRow $top={7}>
                    <Toggle $on aria-label="Rulers"><Icon name="rulers" size={12} /></Toggle><Toggle aria-label="Grid"><Icon name="grid" size={11} /></Toggle>
                    <Toggle aria-label="Pixel grid"><Icon name="pixelGrid" size={12} /></Toggle><Pick w={47} label="Units" value="Pixels" />
                  </IconRow>
                </Block>
                <Block $h={48}>
                  <BlockTitle><Icon name="down" size={6} />Guides</BlockTitle>
                  <IconRow $top={7}>
                    <Toggle $on aria-label="Guides"><Icon name="guides" size={11} /></Toggle><Toggle aria-label="Lock guides"><Icon name="guidesLock" size={11} /></Toggle>
                    <Toggle $on aria-label="Smart guides"><Icon name="guidesSmart" size={11} /></Toggle>
                    <StrokeBox $w={47}><select aria-label="Guide style"><option></option></select><Icon name="down" size={5} /></StrokeBox>
                  </IconRow>
                </Block>
                <Block $h={43}><BlockTitle><Icon name="down" size={6} />Quick Actions</BlockTitle></Block>
              </Content>
              <Track $top={12} $thumb={222}><Icon name="up" size={5} /><Icon name="down" size={5} /></Track>
            </Scroller>
          </Panel>
          <Panel $grow>
            <Tabs><Tab $on>Layers</Tab><button aria-label="Panel menu"><Icon name="menu" size={6} /></button></Tabs>
            <Filters>
              <FilterPick><Pick w={52} label="Filter kind" value="Kind" /><Icon name="search" size={6} /></FilterPick>
              {["image", "adjust", "type", "bounds", "smart"].map(n => <button key={n} aria-label={n}><Icon name={n} size={9} /></button>)}
              <button aria-label="Toggle filter"><svg width="6" height="12" viewBox="0 0 6 12"><rect x="1" y="1" width="4" height="11" rx="2" fill="#3c3c3c" /><circle cx="3" cy="3" r="3" fill="#e4e4e4" /></svg></button>
            </Filters>
            <Blend><Pick w={78} label="Blend mode" value="Normal" flat />Opacity:<Amount>100%<Icon name="down" size={4} /></Amount></Blend>
            <Blend>Lock:{["checker", "brush", "move", "artboard", "lock"].map(n => <button key={n} aria-label={n}><Icon name={n} size={9} /></button>)}<span /><span>Fill:</span><Amount>100%<Icon name="down" size={4} /></Amount></Blend>
            <Scroller>
              <LayerList>
                <LayerRow>
                  <button aria-label="Visibility"><Icon name="eye" size={8} /></button>
                  <LayerBody $left={10} $gap={3}><Icon name="down" size={6} /><Icon name="folder" size={10} /><span />edite text</LayerBody>
                </LayerRow>
                {layers.map((name, i) => (
                  <LayerRow key={name}>
                    <button aria-label="Visibility">{i === 3 ? <NoEye /> : <Icon name="eye" size={8} />}</button>
                    {i === 1
                      ? <LayerBody $left={21} $gap={6}><Thumb />{name}</LayerBody>
                      : <LayerBody $left={26} $gap={11}><Icon name="type" size={10} />{name}</LayerBody>}
                  </LayerRow>
                ))}
              </LayerList>
              <Track $top={22} $thumb={66}><Icon name="up" size={5} /><Icon name="down" size={5} /></Track>
            </Scroller>
            <LayerActions>
              <Dim aria-label="Link"><Icon name="link" size={9} /></Dim><Dim>fx</Dim>
              {["addMask", "adjust", "folder", "plus"].map(n => <button key={n} aria-label={n}><Icon name={n} size={9} /></button>)}
              <Dim aria-label="Delete"><Icon name="trash" size={9} /></Dim>
            </LayerActions>
          </Panel>
        </Side>
      </Body>
      <Watermark>EKOGEA<span>.ORG</span></Watermark>
    </Frame>
  );
}
